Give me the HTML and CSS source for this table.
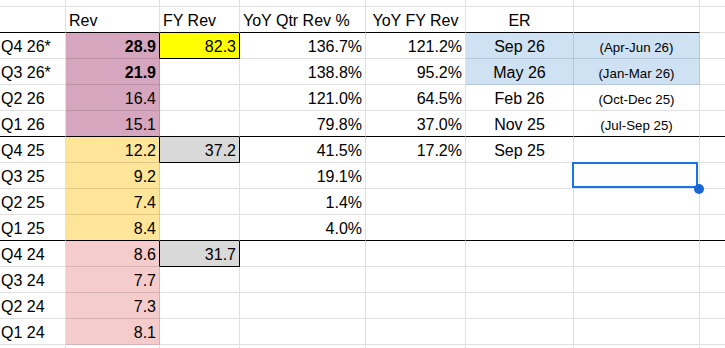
FILE: index.html
```html
<!DOCTYPE html>
<html>
<head>
<meta charset="utf-8">
<link rel="stylesheet" href="styles.css">
</head>
<body>
<div class="sheet">
  <div class="row top"><div class="c"></div><div class="c"></div><div class="c"></div><div class="c"></div><div class="c"></div><div class="c"></div><div class="c"></div><div class="c"></div></div>
  <div class="row head">
    <div class="c"></div><div class="c">Rev</div><div class="c">FY Rev</div><div class="c">YoY Qtr Rev %</div><div class="c ctr">YoY FY Rev</div><div class="c ctr">ER</div><div class="c"></div><div class="c grey-b"></div>
  </div>
  <div class="row">
    <div class="c">Q4 26*</div><div class="c r mag lb b">28.9</div><div class="c r box yel">82.3</div><div class="c r">136.7%</div><div class="c r">121.2%</div><div class="c ctr blue">Sep 26</div><div class="c ctr blue sm">(Apr-Jun 26)</div><div class="c"></div>
  </div>
  <div class="row">
    <div class="c">Q3 26*</div><div class="c r mag b">21.9</div><div class="c"></div><div class="c r">138.8%</div><div class="c r">95.2%</div><div class="c ctr blue">May 26</div><div class="c ctr blue sm">(Jan-Mar 26)</div><div class="c"></div>
  </div>
  <div class="row">
    <div class="c">Q2 26</div><div class="c r mag">16.4</div><div class="c"></div><div class="c r">121.0%</div><div class="c r">64.5%</div><div class="c ctr">Feb 26</div><div class="c ctr sm">(Oct-Dec 25)</div><div class="c"></div>
  </div>
  <div class="row sep">
    <div class="c">Q1 26</div><div class="c r mag">15.1</div><div class="c"></div><div class="c r">79.8%</div><div class="c r">37.0%</div><div class="c ctr">Nov 25</div><div class="c ctr sm">(Jul-Sep 25)</div><div class="c"></div>
  </div>
  <div class="row">
    <div class="c">Q4 25</div><div class="c r ylw lb">12.2</div><div class="c r box gry">37.2</div><div class="c r">41.5%</div><div class="c r">17.2%</div><div class="c ctr">Sep 25</div><div class="c"></div><div class="c"></div>
  </div>
  <div class="row">
    <div class="c">Q3 25</div><div class="c r ylw">9.2</div><div class="c"></div><div class="c r">19.1%</div><div class="c"></div><div class="c"></div><div class="c sel"></div><div class="c"></div>
  </div>
  <div class="row">
    <div class="c">Q2 25</div><div class="c r ylw">7.4</div><div class="c"></div><div class="c r">1.4%</div><div class="c"></div><div class="c"></div><div class="c"></div><div class="c"></div>
  </div>
  <div class="row sep">
    <div class="c">Q1 25</div><div class="c r ylw">8.4</div><div class="c"></div><div class="c r">4.0%</div><div class="c"></div><div class="c"></div><div class="c"></div><div class="c"></div>
  </div>
  <div class="row">
    <div class="c">Q4 24</div><div class="c r pnk lb">8.6</div><div class="c r box gry">31.7</div><div class="c"></div><div class="c"></div><div class="c"></div><div class="c"></div><div class="c"></div>
  </div>
  <div class="row">
    <div class="c">Q3 24</div><div class="c r pnk">7.7</div><div class="c"></div><div class="c"></div><div class="c"></div><div class="c"></div><div class="c"></div><div class="c"></div>
  </div>
  <div class="row">
    <div class="c">Q2 24</div><div class="c r pnk">7.3</div><div class="c"></div><div class="c"></div><div class="c"></div><div class="c"></div><div class="c"></div><div class="c"></div>
  </div>
  <div class="row">
    <div class="c">Q1 24</div><div class="c r pnk">8.1</div><div class="c"></div><div class="c"></div><div class="c"></div><div class="c"></div><div class="c"></div><div class="c"></div>
  </div>
  <div class="row last"><div class="c"></div><div class="c"></div><div class="c"></div><div class="c"></div><div class="c"></div><div class="c"></div><div class="c"></div><div class="c"></div></div>
</div>
</body>
</html>
```
FILE: styles.css
```css
html, body {
  margin: 0;
  padding: 0;
  background: #fff;
  overflow: hidden;
}
body {
  width: 725px;
  height: 348px;
  font-family: "Liberation Sans", Arial, sans-serif;
  font-size: 16px;
  color: #000;
}
.sheet {
  width: 725px;
  height: 348px;
  overflow: hidden;
}
.row {
  display: grid;
  grid-template-columns: 66px 94px 80px 126px 100px 108px 126px 25px;
  height: 26px;
}
.row.top {
  height: 7px;
}
.row.last {
  height: 3px;
}
.row.last .c {
  border-bottom: 0;
}
.c {
  box-sizing: border-box;
  border-right: 1px solid rgba(0, 0, 0, 0.12);
  border-bottom: 1px solid rgba(0, 0, 0, 0.12);
  display: flex;
  align-items: flex-end;
  padding: 0 3px 2px 3px;
  white-space: nowrap;
  overflow: hidden;
  line-height: normal;
}
.row .c:first-child {
  padding-left: 1px;
}
.row .c:last-child {
  border-right: 0;
}
.head .c {
  border-bottom-color: #000;
}
.head .c.grey-b {
  border-bottom-color: rgba(0, 0, 0, 0.12);
}
.sep .c {
  border-bottom-color: #000;
}
.r { justify-content: flex-end; }
.ctr { justify-content: center; }
.b { font-weight: bold; }
.sm { font-size: 13.3px; padding-bottom: 3px; }
.mag { background: #d5a6bd; }
.ylw { background: #ffe599; }
.pnk { background: #f4cccc; }
.blue { background: #cfe2f3; }
.yel { background: #ffff00; }
.gry { background: #d9d9d9; }
.box {
  border-right-color: #000;
  border-bottom-color: #000;
}
.lb {
  border-right-color: #000;
}
.sel {
  position: relative;
  overflow: visible;
}
.sel::before {
  content: "";
  position: absolute;
  left: -2px;
  top: -1px;
  right: 1px;
  bottom: 0;
  border: 2px solid #1a73e8;
}
.sel::after {
  content: "";
  position: absolute;
  left: 120px;
  top: 21px;
  width: 10px;
  height: 10px;
  border-radius: 50%;
  background: #1a66d2;
  z-index: 2;
}
```
